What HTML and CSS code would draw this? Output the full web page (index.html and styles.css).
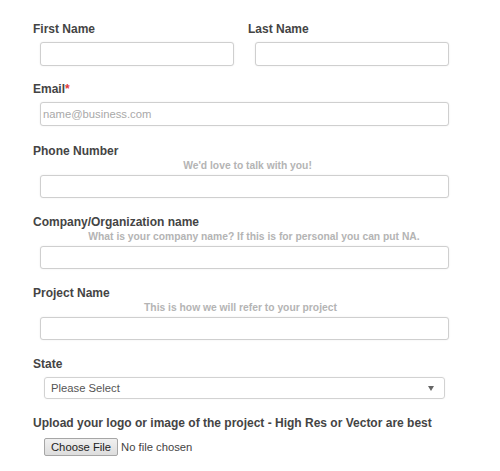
FILE: index.html
```html
<!DOCTYPE html>
<html>
<head>
<meta charset="utf-8">
<link rel="stylesheet" href="styles.css">
</head>
<body>
<form class="form">
  <div class="row">
    <div class="col">
      <label class="lbl">First Name</label>
      <input class="field" type="text">
    </div>
    <div class="col">
      <label class="lbl">Last Name</label>
      <input class="field" type="text">
    </div>
  </div>
  <div class="group group-first">
    <label class="lbl">Email<span class="req">*</span></label>
    <input class="field" type="text" placeholder="name@business.com">
  </div>
  <div class="group group-wide">
    <label class="lbl">Phone Number</label>
    <div class="help help-phone">We'd love to talk with you!</div>
    <input class="field field-help" type="text">
  </div>
  <div class="group">
    <label class="lbl">Company/Organization name</label>
    <div class="help help-shift">What is your company name? If this is for personal you can put NA.</div>
    <input class="field field-help" type="text">
  </div>
  <div class="group">
    <label class="lbl">Project Name</label>
    <div class="help help-left">This is how we will refer to your project</div>
    <input class="field field-help" type="text">
  </div>
  <div class="group">
    <label class="lbl">State</label>
    <div class="select"><span>Please Select</span><span class="arrow"></span></div>
  </div>
  <div class="group">
    <label class="lbl">Upload your logo or image of the project - High Res or Vector are best</label>
    <div class="file"><span class="file-btn">Choose File</span><span class="file-txt">No file chosen</span></div>
  </div>
</form>
</body>
</html>
```

FILE: styles.css
```css
html, body {
  margin: 0;
  padding: 0;
  background: #fff;
}
.form {
  width: 423px;
  padding: 22px 0 0 33px;
  font-family: "Liberation Sans", Arial, sans-serif;
  display: flex;
  flex-direction: column;
}
.row {
  display: flex;
  gap: 7px;
}
.col {
  flex: 1;
  display: flex;
  flex-direction: column;
}
.group {
  display: flex;
  flex-direction: column;
  margin-top: 17px;
}
.group-first {
  margin-top: 16px;
}
.group-wide {
  margin-top: 18px;
}
.lbl {
  display: block;
  font-size: 12px;
  font-weight: bold;
  color: #444;
  line-height: 14px;
}
.req {
  color: #e03a3a;
}
.help {
  font-size: 10.3px;
  font-weight: bold;
  color: #b4b4b4;
  text-align: center;
  line-height: 12px;
  margin-top: 2px;
}
.help-phone {
  padding-left: 6px;
}
.help-shift {
  padding-left: 19px;
}
.help-left {
  padding-right: 8px;
}
.field {
  box-sizing: border-box;
  height: 24px;
  margin: 6px 7px 0 7px;
  border: 1px solid #cfcfcf;
  border-radius: 3px;
  box-shadow: 0 0 2px rgba(0,0,0,0.08);
  font-family: "Liberation Sans", Arial, sans-serif;
  font-size: 11.25px;
  padding: 0 2px;
  outline: none;
  background: #fff;
}
.field-help {
  height: 23px;
  margin-top: 3px;
}
.field::placeholder {
  color: #a9a9a9;
}
.select {
  box-sizing: border-box;
  height: 22px;
  margin: 6px 11px 0 11px;
  border: 1px solid #d2d2d2;
  border-radius: 3px;
  box-shadow: 0 0 2px rgba(0,0,0,0.06);
  display: flex;
  align-items: center;
  justify-content: space-between;
  padding: 0 10px 0 6px;
  font-size: 11.25px;
  color: #555;
}
.arrow {
  width: 0;
  height: 0;
  border-left: 3px solid transparent;
  border-right: 3px solid transparent;
  border-top: 5px solid #666;
}
.file {
  display: flex;
  align-items: center;
  margin: 8px 0 0 11px;
  font-size: 11.25px;
}
.file-btn {
  box-sizing: border-box;
  height: 18px;
  display: flex;
  align-items: center;
  padding: 0 6px;
  border: 1px solid #a6a6a6;
  border-radius: 2px;
  background: linear-gradient(#f0f0f0, #dddddd);
  color: #222;
}
.file-txt {
  margin-left: 3px;
  color: #444;
}
```
